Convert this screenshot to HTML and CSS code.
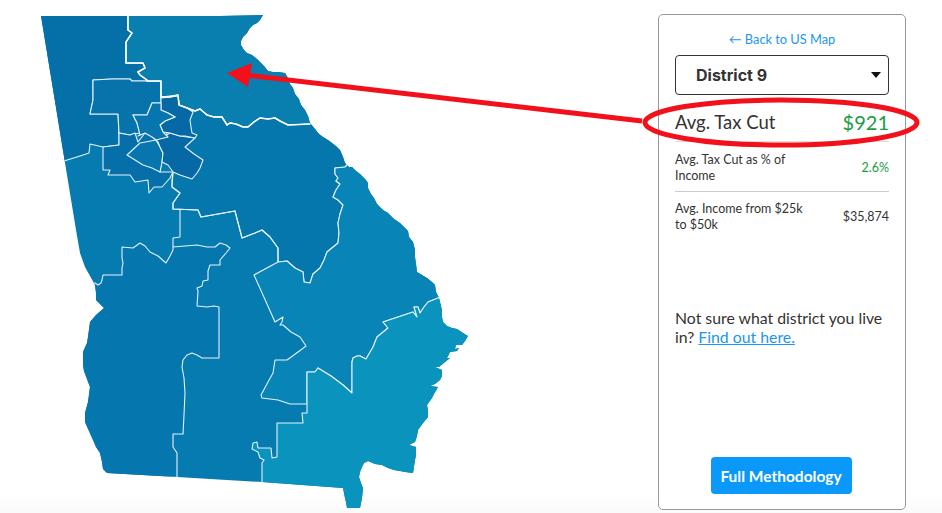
FILE: index.html
```html
<!DOCTYPE html>
<html lang="en">
<head>
<meta charset="utf-8">
<title>Avg. Tax Cut by District</title>
<link rel="stylesheet" href="styles.css">
</head>
<body>
<main class="page">
  <svg class="map" viewBox="0 0 658 513" width="658" height="513" aria-label="Map of Georgia congressional districts">
    <defs>
      <clipPath id="state">
        <path d="M41 16L128 16L220 16L263 15L260 20L257 23L253 25L250 28L247 33L243 37L241 41L241 45L244 50L247 53L252 55L257 59L261 63L264 66L268 71L273 72L278 72L285 73L288 78L290 84L293 88L295 94L299 99L301 105L305 110L308 116L310 123L315 129L319 134L323 137L328 140L332 143L337 147L340 150L343 157L345 163L349 167L352 167L356 171L360 174L365 179L368 183L368 188L371 194L374 198L377 204L383 210L388 213L394 219L400 223L405 228L408 231L409 237L413 242L415 250L415 257L416 264L417 272L422 275L427 278L432 282L435 285L436 292L439 298L442 310L442 317L443 322L447 326L452 328L457 329L463 333L468 336L465 341L462 345L456 345L455 349L459 348L457 351L450 352L447 358L450 358L445 362L439 367L435 367L442 370L442 376L440 380L435 384L430 386L438 387L434 394L432 398L427 405L428 411L428 417L423 423L418 430L417 436L415 442L409 445L416 447L416 455L415 460L413 473L405 472L400 471L394 470L388 468L382 465L375 464L368 461L364 463L362 467L360 472L359 477L361 483L363 488L362 498L360 508L347 508L346 502L345 498L343 488L262 482L177 477L107 473L103 469L102 462L100 453L96 447L93 440L89 431L85 422L85 413L88 402L90 387L87 379L84 371L83 365L83 352L87 343L88 337L90 322L96 315L104 308L100 304L96 300L96 293L95 285L90 276L85 267L80 253L76 230Z"/>
      </clipPath>
    </defs>
    <g clip-path="url(#state)">
      <rect class="d-base" x="30" y="10" width="450" height="503"/>
      <path class="d-sw" d="M95 283L98 285L101 283L102 280L103 275L122 275L122 268L123 263L122 258L122 247L133 248L140 243L145 246L150 252L158 256L166 263L170 256L173 250L173 247L185 246L197 245L207 247L215 247L220 243L226 245L230 248L226 253L220 260L220 265L210 265L208 271L208 280L203 281L202 286L197 288L198 291L197 306L207 307L214 306L219 307L219 358L202 358L197 355L192 353L187 355L183 360L182 367L184 378L185 393L184 415L183 434L173 434L173 447L177 453L177 477L60 480L60 283Z"/>
      <path class="d-nw" d="M30 10L128 10L128 30L132 33L126 42L126 63L143 63L145 68L138 72L140 75L147 80L147 81L132 81L130 79L112 79L93 80L93 100L90 114L118 114L119 133L119 145L103 147L90 144L89 153L80 156L64 161L30 165Z"/>
      <path class="d-north" d="M93 80L112 79L130 79L132 81L147 81L161 81L161 103L152 103L147 115L133 115L137 123L140 133L130 135L119 133L118 114L90 114L93 100Z"/>
      <path class="d-ne" d="M128 10L300 10L330 124L310 124L288 125L280 121L275 118L268 119L260 118L254 122L248 127L243 127L236 124L230 123L227 125L222 117L214 117L207 115L200 109L195 111L187 108L179 105L178 95L170 97L161 97L161 81L147 81L147 80L140 75L138 72L145 68L143 63L126 63L126 42L132 33L128 30Z"/>
      <path class="d-center" d="M161 97L178 95L179 105L187 108L195 111L200 109L207 115L214 117L222 117L227 125L230 123L236 124L243 127L248 127L254 122L260 118L268 119L275 118L280 121L288 125L310 124L330 120L350 160L345 167L335 168L335 174L338 178L336 181L340 184L336 190L333 197L338 200L343 205L340 214L338 223L339 233L338 243L327 252L324 260L320 268L313 274L310 283L304 282L303 272L295 268L287 261L278 262L278 248L270 237L262 230L255 233L242 238L235 211L218 214L201 217L198 210L173 209L173 203L180 193L172 187L173 172Z"/>
      <path class="d-east" d="M345 167L352 160L400 190L450 298L438 298L428 302L424 307L420 313L418 307L414 307L417 317L413 312L383 322L388 328L377 337L373 347L366 359L360 356L357 356L353 358L352 362L352 393L343 385L331 376L318 368L315 372L307 372L307 404L290 404L278 400L262 398L261 395L268 382L273 373L275 360L287 360L298 352L306 346L300 337L291 332L283 325L280 325L282 322L283 317L275 322L254 275L278 262L287 261L295 268L303 272L304 282L310 283L313 274L320 268L324 260L327 252L338 243L339 233L338 223L340 214L343 205L338 200L333 197L336 190L340 184L336 181L338 178L335 174L335 168Z"/>
      <path class="d-se" d="M438 298L480 280L500 520L262 520L262 463L264 460L260 458L258 452L252 449L253 443L257 442L258 448L271 448L272 458L277 457L277 423L303 423L302 413L307 413L307 404L307 372L315 372L318 368L331 376L343 385L352 393L352 362L353 358L357 356L360 356L366 359L373 347L377 337L388 328L383 322L413 312L417 317L414 307L418 307L420 313L424 307L428 302L438 298Z"/>
      <path class="d-atl" d="M119 133L130 135L135 133L138 142L145 133L152 136L156 140L163 153L160 172L173 172L170 178L162 187L154 187L149 193L148 180L135 182L130 175L108 175L110 170L103 170L103 147L119 145Z"/>
      <path class="d-mid" d="M127 155L140 143L156 140L160 147L163 153L162 162L160 172L152 168L143 165L135 160Z"/>
      <path class="d-dark" d="M156 140L163 137L170 133L180 136L195 138L185 147L194 154L203 160L200 168L197 173L192 179L186 177L180 175L173 172L168 165L162 162L163 153L160 147L158 142Z"/>
      <path class="d-dark" d="M161 98L170 97L178 96L179 105L187 108L193 112L190 120L191 127L192 133L197 135L195 138L185 136L180 136L170 133L163 132L160 125L165 121L175 117L168 113L161 110Z"/>
      <path class="d-mid" d="M133 115L147 115L152 103L161 103L161 110L168 113L175 117L165 121L160 125L163 132L168 137L156 140L152 137L145 133L138 136L140 135L137 123Z"/>
      <path class="d-line" d="M173 172L172 180L172 187L180 193L173 203L173 209L198 210L201 217L218 214L235 211L242 238L255 233L262 230L270 237L278 248L278 262"/>
      <path class="d-line" d="M180 209L180 237L173 238L173 247"/>
      <path class="d-strong" d="M128 16L128 30L132 33L126 42L126 63L143 63L145 68L138 72L140 75L147 80L147 81L161 81L161 97L170 97L178 95L179 105L187 108L195 111L200 109L207 115L214 117L222 117L227 125L230 123L236 124L243 127L248 127L254 122L260 118L268 119L275 118L280 121L288 125L310 124"/>
    </g>
  </svg>

  <aside class="panel">
    <a class="back" href="#">← Back to US Map</a>
    <div class="select">
      <span>District 9</span>
      <i class="caret"></i>
    </div>
    <div class="row row-main">
      <span>Avg. Tax Cut</span>
      <strong class="good">$921</strong>
    </div>
    <div class="row row-small">
      <span>Avg. Tax Cut as % of Income</span>
      <span class="good">2.6%</span>
    </div>
    <div class="row row-small">
      <span>Avg. Income from $25k to $50k</span>
      <span>$35,874</span>
    </div>
    <p class="note">Not sure what district you live in? <a href="#">Find out here.</a></p>
    <a class="button" href="#">Full Methodology</a>
  </aside>

  <svg class="annotation" viewBox="0 0 942 513" width="942" height="513" aria-hidden="true">
    <ellipse class="ring" cx="781" cy="122.5" rx="136" ry="22.5"/>
    <line class="shaft" x1="245" y1="75" x2="642" y2="121"/>
    <polygon class="head" points="227,73 252,63 248,87"/>
  </svg>
</main>
</body>
</html>
```

FILE: styles.css
```css
* { box-sizing: border-box; }

html, body {
  margin: 0;
  background: #fff;
}

body {
  font-family: Lato, "Open Sans", sans-serif;
  color: #333;
}

.page {
  position: relative;
  display: flex;
  align-items: flex-start;
  width: 942px;
  height: 513px;
  overflow: hidden;
  background: linear-gradient(to bottom, #fff 96%, #fafafa 100%);
}

.map {
  display: block;
  flex: none;
}

.d-sw, .d-nw, .d-north, .d-ne, .d-center, .d-east, .d-se, .d-atl, .d-mid, .d-dark, .d-line, .d-strong {
  stroke: #e6f3f9;
  stroke-width: 1.1;
  stroke-linejoin: round;
}

.d-base { fill: #067bb0; }
.d-sw { fill: #0677ae; }
.d-nw { fill: #056fa8; }
.d-north { fill: #0673ab; }
.d-ne { fill: #097fb0; }
.d-center { fill: #0677ad; }
.d-east { fill: #0885b6; }
.d-se { fill: #0a93bd; }
.d-atl { fill: #066fa9; }
.d-mid { fill: #0776ae; }
.d-dark { fill: #0669a6; }
.d-line { fill: none; }
.d-strong { fill: none; stroke: #fff; stroke-width: 1.5; }

.panel {
  display: flex;
  flex-direction: column;
  flex: none;
  width: 248px;
  height: 496px;
  margin-top: 14px;
  padding: 16px 16px 15px;
  border: 1px solid #999;
  border-radius: 5px;
  background: #fff;
}

.back {
  font-size: 12.8px;
  line-height: 17px;
  text-align: center;
  color: #2097ee;
  text-decoration: none;
}

.select {
  display: flex;
  align-items: center;
  justify-content: space-between;
  height: 40px;
  margin-top: 7px;
  padding: 0 7px 0 20px;
  border: 1px solid #333;
  border-radius: 4px;
  font-family: Inter, "Liberation Sans", sans-serif;
  font-size: 16px;
  font-weight: 700;
}

.caret {
  width: 0;
  height: 0;
  border-left: 5px solid transparent;
  border-right: 5px solid transparent;
  border-top: 6px solid #111;
}

.row {
  display: flex;
  align-items: center;
  justify-content: space-between;
  gap: 24px;
}

.row-main {
  height: 47px;
  padding-top: 8px;
  border-bottom: 1px solid #ddd;
  font-size: 18.5px;
}

.row-main strong {
  font-size: 20px;
  font-weight: 400;
}

.row-small {
  height: 49px;
  padding-top: 2px;
  font-size: 12.5px;
  line-height: 16px;
}

.row-small + .row-small {
  border-top: 1px solid #ccc;
}

.row-small span:first-child {
  width: 142px;
}

.good { color: #1a9c45; }

.note {
  margin: 68px 0 0;
  font-size: 15.8px;
  line-height: 19px;
}

.note a {
  color: #2097ee;
}

.button {
  align-self: center;
  width: 141px;
  height: 37px;
  margin-top: auto;
  margin-left: -2px;
  border-radius: 4px;
  background: #0a98fa;
  color: #fff;
  font-size: 15.5px;
  font-weight: 700;
  line-height: 38px;
  text-align: center;
  text-decoration: none;
}

.annotation {
  position: absolute;
  top: 0;
  left: 0;
  pointer-events: none;
}

.ring {
  fill: none;
  stroke: #f2111a;
  stroke-width: 5;
}

.shaft {
  stroke: #f2111a;
  stroke-width: 5;
}

.head {
  fill: #f2111a;
}
```
